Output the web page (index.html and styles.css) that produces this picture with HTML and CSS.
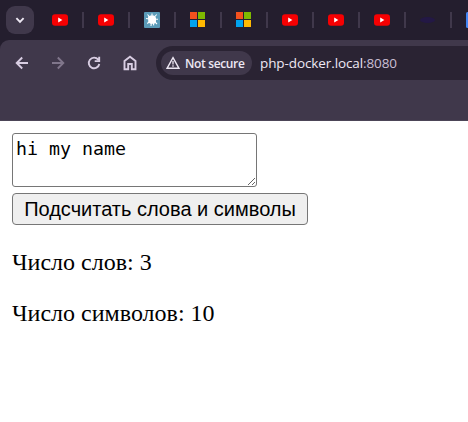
FILE: index.html
```html
<!DOCTYPE html>
<html lang="ru">
<head>
<meta charset="utf-8">
<title>php-docker.local:8080</title>
<link rel="stylesheet" href="styles.css">
</head>
<body>
<svg class="defs" width="0" height="0" aria-hidden="true">
  <symbol id="video" viewBox="0 0 16 16"><rect y="2.2" width="16" height="11.6" rx="3" fill="#f60002"/><path d="M6.2 5.500v5l4.200-2.500z" fill="#fff"/></symbol>
  <symbol id="windows" viewBox="0 0 16 16"><path d="M0 0h7v7H0z" fill="#f4511e"/><path d="M8 0h7v7H8z" fill="#7eb900"/><path d="M0 8h7v7H0z" fill="#01a3ee"/><path d="M8 8h7v7H8z" fill="#ffb902"/></symbol>
</svg>
<header class="browser">
  <div class="tabs">
    <button class="search" aria-label="Tabs"><svg width="10" height="8" viewBox="0 0 10 8"><path d="M1.400 2.200 5 5.800l3.600-3.600" fill="none" stroke="#eee8f4" stroke-width="1.900"/></svg></button>
    <div class="tab"><svg><use href="#video"/></svg></div>
    <div class="tab"><svg><use href="#video"/></svg></div>
    <div class="tab"><svg viewBox="0 0 16 16"><rect width="16" height="16" rx="1" fill="#5b9bb8"/><path d="M4 4.500 6.500 3.500H10l2 2v4l-1.500 2.200H6.200L4.300 10z" fill="#fff"/><path d="m3.500 2.500 2.500 3M8 1.500V5M12.700 2.500 10 5.500M2 6.500 5.500 7M14 7.300h-4M3.200 11.500 6 9.500M13 12l-3-3M7 14l.5-4M9.800 13.300 9 10" stroke="#fff" stroke-width="1.100"/></svg></div>
    <div class="tab"><svg><use href="#windows"/></svg></div>
    <div class="tab"><svg><use href="#windows"/></svg></div>
    <div class="tab"><svg><use href="#video"/></svg></div>
    <div class="tab"><svg><use href="#video"/></svg></div>
    <div class="tab"><svg><use href="#video"/></svg></div>
    <div class="tab"><svg viewBox="0 0 16 16"><ellipse cx="7.500" cy="8" rx="7.500" ry="3" fill="#231845"/></svg></div>
    <div class="tab"><svg viewBox="0 0 16 16"><rect width="16" height="16" rx="1.500" fill="#4285f4"/><path d="M3 4h10M3 8h10M3 12h7" stroke="#fff" stroke-width="2"/></svg></div>
  </div>
  <div class="toolbar">
    <nav class="nav">
      <svg viewBox="0 0 16 16"><path d="M14 8H3M8.200 2.500 2.700 8l5.500 5.500"/></svg>
      <svg class="off" viewBox="0 0 16 16"><path d="M2 8h11M7.800 2.500 13.300 8l-5.500 5.500"/></svg>
      <svg viewBox="0 0 16 16"><path d="M12.200 4.600A5.300 5.300 0 1 0 13.300 9M13.200 1.800V6.100H8.700"/></svg>
      <svg viewBox="0 0 16 16"><path d="M2.500 14.200V6L8 1.800 13.500 6v8.200H9.800V9H6.200v5.200z"/></svg>
    </nav>
    <div class="address">
      <div class="chip"><svg viewBox="0 0 14 14"><path d="M7 1.600 13 12.300H1z" fill="none" stroke="#eee8f4" stroke-width="1.400"/><path d="M7 5v3.400M7 9.300v1.400" stroke="#eee8f4" stroke-width="1.300"/></svg><span class="label">Not secure</span></div>
      <span class="url">php-docker.local<span class="port">:8080</span></span>
    </div>
  </div>
</header>
<main class="page">
  <textarea spellcheck="false">hi my name</textarea>
  <button class="submit">Подсчитать слова и символы</button>
  <p>Число слов: 3</p>
  <p>Число символов: 10</p>
</main>
</body>
</html>
```
FILE: styles.css
```css
* { box-sizing: border-box; }
body { margin: 0; background: #fff; overflow: hidden; }
.defs { position: absolute; }
.browser { height: 121px; background: #241e2e; }
.tabs { display: flex; align-items: center; height: 40px; padding-left: 6px; overflow: hidden; }
.search { display: flex; align-items: center; justify-content: center; flex: none; width: 28px; height: 28px; margin-right: 4px; padding: 0; border: 0; border-radius: 9px; background: #40384b; }
.tab { display: flex; align-items: center; justify-content: space-between; flex: none; width: 46px; height: 16px; padding-left: 14px; border-right: 2px solid #40384b; }
.tab svg { width: 16px; height: 16px; }
.toolbar { display: flex; align-items: flex-start; height: 81px; padding-top: 6px; background: #40384b; border-bottom: 1px solid #4c4557; border-top-left-radius: 9px; }
.nav { display: flex; align-items: center; flex: none; gap: 20px; width: 156px; height: 34px; padding-left: 14px; }
.nav svg { width: 16px; height: 16px; flex: none; fill: none; stroke: #d8cde2; stroke-width: 1.9; }
.nav .off { stroke: #80768b; }
.address { display: flex; align-items: center; flex: 1; height: 34px; padding-left: 5px; background: #2a2333; border-radius: 17px 0 0 17px; font-family: "Open Sans", sans-serif; white-space: nowrap; }
.chip { display: flex; align-items: center; flex: none; width: 91px; height: 24px; padding-left: 5px; border-radius: 12px; background: #40384b; color: #eee8f4; }
.chip svg { width: 14px; height: 14px; margin-right: 5px; }
.label { font-size: 12px; font-weight: 600; letter-spacing: -0.35px; }
.url { margin-left: 8px; color: #eee8f4; font-size: 13.5px; letter-spacing: -0.1px; }
.port { color: #cbbfd5; }
.page { padding: 12px; font: 24px/27px "Liberation Serif", serif; color: #000; }
textarea { display: block; width: 245px; height: 54px; margin: 0; padding: 3px; border: 1px solid #767676; border-radius: 3px; font: 18.27px/23px "DejaVu Sans Mono", monospace; color: #000; }
.submit { display: block; width: 296px; height: 32px; margin-top: 6px; padding: 0; border: 1px solid #767676; border-radius: 4px; background: #efefef; color: #000; font: 20px "Liberation Sans", sans-serif; white-space: nowrap; }
p { margin: 24px 0; }
```
